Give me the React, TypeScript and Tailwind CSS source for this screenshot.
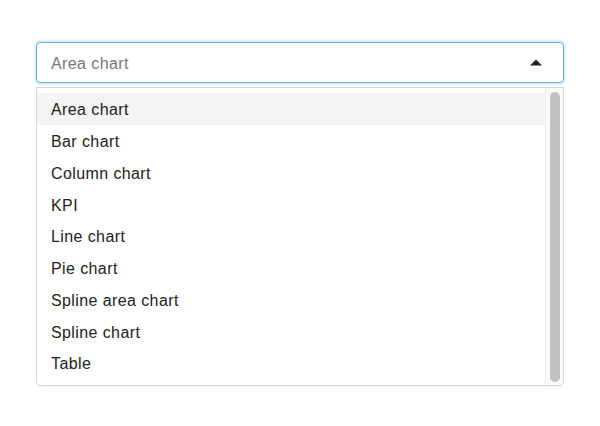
import React from "react";

const items = [
  "Area chart",
  "Bar chart",
  "Column chart",
  "KPI",
  "Line chart",
  "Pie chart",
  "Spline area chart",
  "Spline chart",
  "Table",
];

export default function App() {
  return (
    <div
      className="w-[600px] h-[426px] bg-white px-[36px] pt-[42px]"
      style={{ fontFamily: '"Liberation Sans", Arial, sans-serif' }}
    >
      <div className="flex h-[41px] w-[528px] items-center justify-between rounded-[4px] border border-[#66afe9] bg-white pl-[14px] pr-[21px] shadow-[0_0_4px_rgba(102,175,233,0.6)]">
        <span className="pt-[2px] text-[16px] tracking-[0.4px] text-[#777777]">Area chart</span>
        <svg width="12" height="7" viewBox="0 0 12 7">
          <path d="M0 6.5 L6 0.5 L12 6.5 Z" fill="#222" />
        </svg>
      </div>
      <div className="mt-[4px] flex h-[299px] w-[528px] rounded-b-[4px] border border-[#d6d6d6] bg-white shadow-[0_1px_2px_rgba(0,0,0,0.06)]">
        <div className="flex-1 pt-[5px]">
          {items.map((it, i) => (
            <div
              key={it}
              className={`flex h-[31.75px] items-center pl-[14px] pt-[3px] text-[16px] tracking-[0.4px] text-[#222222] ${
                i === 0 ? "bg-[#f4f4f4]" : ""
              }`}
            >
              {it}
            </div>
          ))}
        </div>
        <div className="flex w-[18px] justify-center border-l border-[#ececec] bg-[#fafafa] pt-[4px] pb-[3px]">
          <div className="w-[10px] rounded-full bg-[#c1c1c1]" />
        </div>
      </div>
    </div>
  );
}
